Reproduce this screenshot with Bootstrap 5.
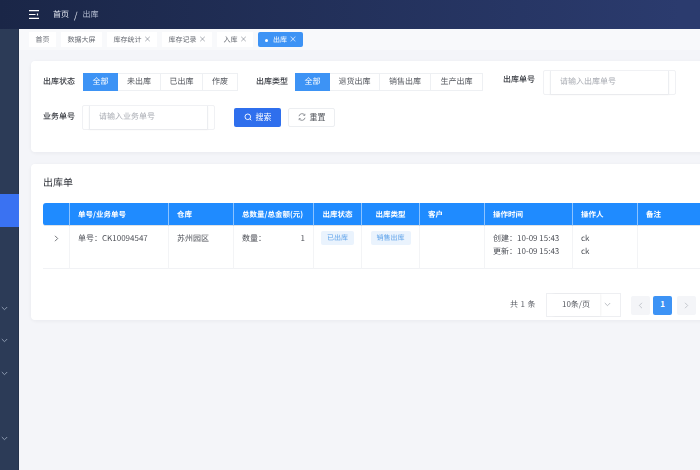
<!DOCTYPE html>
<html lang="zh-CN">
<head>
    <meta charset="UTF-8">
    <meta name="viewport" content="width=device-width, initial-scale=1.0">
    <title>出库</title>
    <link rel="stylesheet" href="https://cdn.jsdelivr.net/npm/bootstrap@5.3.0/dist/css/bootstrap.min.css">
    <style>
        html, body { height: 470px; overflow: hidden; }
        body {
            background: #f4f5f9;
            color: #4c4f56;
            font-family: "Noto Sans CJK SC", "Noto Sans", sans-serif;
            font-size: 8px;
            line-height: 1.3;
            text-rendering: geometricPrecision;
        }
        .shell { width: 800px; height: 470px; overflow: hidden; opacity: .999; }
        .side-bar { width: 19px; background: #2c3b57; flex: none; padding-top: 31px; border-right: 1px solid #26334c; }
        .side-item { height: 32.6px; color: #8d9ab0; }
        .side-item.is-active { background: #3a72f2; margin-right: -1px; }
        .side-arrow { margin-left: 1px; }
        .main-col { width: 781px; flex: none; }
        .top-bar {
            height: 29px; margin-left: -19px; padding-left: 29px;
            width: 800px;
            background: linear-gradient(90deg, #1a2647, #2b3b6e 85%);
            color: #e8ecf5;
            font-size: 8px;
            position: relative;
        }
        .top-bar span { padding-top: 2px; }
        .top-menu { margin-right: 14px; }
        .top-bar .crumb-sep { margin: 0 5px; font-size: 9px; }
        .top-bar .crumb-now { color: #aeb7cc; }
        .tab-bar { height: 21px; background: #f8f9fb; padding: 3px 0 0 10px; gap: 5px; align-items: flex-start; }
        .tab-item {
            height: 15px; padding: 2px 6.5px 0; background: #fff; font-size: 7px;
            color: #62666e; white-space: nowrap;
        }
        .tab-item.is-on { background: #3d93f5; color: #fff; border-radius: 2px; padding: 2px 7px 0; }
        .tab-dot { width: 3px; height: 3px; border-radius: 50%; background: #fff; margin-right: 5px; }
        .tab-x { color: #9a9ea6; font-size: 8px; width: 7px; margin-left: 2px; text-align: center; }
        .is-on .tab-x { color: #dcecff; }
        .body-area { padding: 11px 0 0 12px; }
        .panel-box { background: #fff; border-radius: 4px; box-shadow: 0 1px 5px rgba(30, 40, 70, .06); }
        .filter-box { height: 91px; padding: 9px 0 0 12px; }
        .filter-row { height: 24px; }
        .filter-row + .filter-row { margin-top: 11px; }
        .field-label { color: #33363d; font-weight: 500; white-space: nowrap; padding-top: 1px; }
        .field-gap { margin-left: 18px; }
        .field-gap-wide { margin-left: 20px; padding-top: 0; padding-bottom: 3px; }
        .seg-group { display: flex; height: 18px; margin-left: 8px; }
        .seg-gap { margin-left: 7px; }
        .seg-btn {
            display: flex; align-items: center; justify-content: center; padding-top: 1px;
            border: 1px solid #eef0f3; border-left-width: 0; color: #55585f; background: #fff;
        }
        .seg-btn:first-child { border-left-width: 1px; }
        .seg-btn.is-on { background: #3d93f5; border-color: #3d93f5; color: #fff; }
        .input-outer { height: 25px; width: 133px; padding: 0 6px; border: 1px solid #f0f1f4; border-radius: 2px; flex: none; }
        .input-inner {
            height: 100%; border: 1px solid #eceef1; border-width: 0 1px; padding: 1px 9px 0;
            color: #a8abb2; display: flex; align-items: center; box-shadow: 0 1px 2px rgba(0, 0, 0, .04);
            white-space: nowrap;
        }
        .act-btn { height: 19px; font-size: 8px; padding: 0; border-radius: 2px; gap: 4px; display: flex; align-items: center; justify-content: center; }
        .act-search { width: 47px; background: #2f6fed; color: #fff; border: 0; margin-left: 19px; }
        .act-reset { width: 47px; background: #fff; color: #55585f; border: 1px solid #eceef1; margin-left: 7px; }
        .list-box { height: 156px; margin-top: 12px; padding: 10px 0 0 12px; }
        .list-title { font-size: 10px; color: #33363d; height: 29px; line-height: 15px; }
        table.stock-table { table-layout: fixed; width: 720px; border-collapse: separate; border-spacing: 0; margin: 0; }
        .stock-table th {
            height: 23px; background: #1f8bff; color: #fff; font-weight: 700; font-size: 7.5px;
            padding: 2px 0 0 8px; border-right: 1px solid #8cc3ff; vertical-align: middle; white-space: nowrap;
            overflow: hidden; line-height: 1;
        }
        .stock-table th:first-child { border-radius: 3px 0 0 3px; }
        .stock-table td {
            height: 43px; padding: 6px 8px 0; border-right: 1px solid #f3f4f6; border-bottom: 1px solid #f1f2f5;
            vertical-align: top; color: #4c4f56; line-height: 13.3px; font-size: 8px; background: #fff;
            white-space: nowrap;
        }
        .stock-table th.th-center { text-align: center; padding: 2px 0 0; }
        .stock-table td.tag-cell { padding: 5px 4px 0; text-align: center; }
        .row-arrow { color: #a3a7ae; padding-left: 11px !important; }
        .qty-line { display: flex; justify-content: space-between; }
        .soft-tag {
            display: inline-block; background: #eaf3fd; color: #5fa3ea; font-size: 7px;
            padding: 0 6px; height: 14px; line-height: 15px; border-radius: 2px;
        }
        .pager-row { width: 653px; margin-top: 24px; justify-content: flex-end; align-items: center; }
        .pager-total { color: #5c5f66; margin-right: 10px; letter-spacing: .4px; }
        .size-box {
            width: 75px; height: 24px; border: 1px solid #eeeff2; padding: 0 5px; display: flex;
            align-items: center; color: #55585f; margin-right: 10px;
        }
        .size-val { width: 48px; height: 100%; display: flex; align-items: center; justify-content: center; box-shadow: 1px 0 2px rgba(0, 0, 0, .05); }
        .size-arrow { flex: 1; text-align: center; }
        .page-cell { width: 19px; height: 19px; display: flex; align-items: center; justify-content: center; background: #f4f5f8; border-radius: 2px; color: #b9bcc3; }
        .page-cell.is-on { background: #3d93f5; color: #fff; font-weight: 700; margin: 0 5px 0 3px; padding-top: 1px; }
    </style>
</head>
<body>
<div class="shell d-flex">
    <aside class="side-bar">
        <div class="side-item"></div>
        <div class="side-item"></div>
        <div class="side-item"></div>
        <div class="side-item"></div>
        <div class="side-item"></div>
        <div class="side-item is-active"></div>
        <div class="side-item"></div>
        <div class="side-item"></div>
        <div class="side-item d-flex align-items-center"><svg width="7" height="5" viewBox="0 0 7 5" class="side-arrow"><path d="M.8 1l2.7 2.7L6.2 1" fill="none" stroke="currentColor"/></svg></div>
        <div class="side-item d-flex align-items-center"><svg width="7" height="5" viewBox="0 0 7 5" class="side-arrow"><path d="M.8 1l2.7 2.7L6.2 1" fill="none" stroke="currentColor"/></svg></div>
        <div class="side-item d-flex align-items-center"><svg width="7" height="5" viewBox="0 0 7 5" class="side-arrow"><path d="M.8 1l2.7 2.7L6.2 1" fill="none" stroke="currentColor"/></svg></div>
        <div class="side-item"></div>
        <div class="side-item d-flex align-items-center"><svg width="7" height="5" viewBox="0 0 7 5" class="side-arrow"><path d="M.8 1l2.7 2.7L6.2 1" fill="none" stroke="currentColor"/></svg></div>
    </aside>
    <div class="main-col">
        <header class="top-bar d-flex align-items-center">
            <svg width="10" height="9" viewBox="0 0 10 9" class="top-menu"><path d="M0 .7h10M0 4.5h6.5M0 8.3h10M8.5 3.5v2" fill="none" stroke="#fff" stroke-width="1.2"/></svg>
            <span>首页</span><span class="crumb-sep">/</span><span class="crumb-now">出库</span>
        </header>
        <nav class="tab-bar d-flex">
            <div class="tab-item d-flex align-items-center">首页</div>
            <div class="tab-item d-flex align-items-center">数据大屏</div>
            <div class="tab-item d-flex align-items-center">库存统计<span class="tab-x">×</span></div>
            <div class="tab-item d-flex align-items-center">库存记录<span class="tab-x">×</span></div>
            <div class="tab-item d-flex align-items-center">入库<span class="tab-x">×</span></div>
            <div class="tab-item is-on d-flex align-items-center"><span class="tab-dot"></span>出库<span class="tab-x">×</span></div>
        </nav>
        <main class="body-area">
            <section class="panel-box filter-box">
                <div class="filter-row d-flex align-items-center">
                    <span class="field-label">出库状态</span>
                    <div class="seg-group">
                        <span class="seg-btn is-on" style="width:35px">全部</span>
                        <span class="seg-btn" style="width:43px">未出库</span>
                        <span class="seg-btn" style="width:42px">已出库</span>
                        <span class="seg-btn" style="width:35px">作废</span>
                    </div>
                    <span class="field-label field-gap">出库类型</span>
                    <div class="seg-group seg-gap">
                        <span class="seg-btn is-on" style="width:35px">全部</span>
                        <span class="seg-btn" style="width:50px">退货出库</span>
                        <span class="seg-btn" style="width:51px">销售出库</span>
                        <span class="seg-btn" style="width:52px">生产出库</span>
                    </div>
                    <span class="field-label field-gap-wide">出库单号</span>
                    <div class="input-outer ms-2"><div class="input-inner">请输入出库单号</div></div>
                </div>
                <div class="filter-row d-flex align-items-center">
                    <span class="field-label">业务单号</span>
                    <div class="input-outer" style="margin-left:7px"><div class="input-inner">请输入业务单号</div></div>
                    <button type="button" class="btn act-btn act-search">
                        <svg width="8" height="8" viewBox="0 0 8 8"><circle cx="3.8" cy="3.8" r="2.8" fill="none" stroke="#fff" stroke-width=".9"/><path d="M6 6l1.3 1.3" stroke="#fff" stroke-width=".9"/></svg><span>搜索</span>
                    </button>
                    <button type="button" class="btn act-btn act-reset">
                        <svg width="8" height="8" viewBox="0 0 8 8"><path d="M1 3.2A3.1 3.1 0 0 1 6.6 2M7 4.8A3.1 3.1 0 0 1 1.4 6" fill="none" stroke="#72767d" stroke-width=".8"/><path d="M6.9.8v1.6H5.3M1.1 7.2V5.6h1.6" fill="none" stroke="#72767d" stroke-width=".7"/></svg><span>重置</span>
                    </button>
                </div>
            </section>
            <section class="panel-box list-box">
                <div class="list-title">出库单</div>
                <table class="table stock-table">
                    <colgroup>
                        <col style="width:27px"><col style="width:99px"><col style="width:65px"><col style="width:80px"><col style="width:48px">
                        <col style="width:58px"><col style="width:65px"><col style="width:88px"><col style="width:65px"><col style="width:125px">
                    </colgroup>
                    <thead>
                        <tr>
                            <th></th><th>单号/业务单号</th><th>仓库</th><th>总数量/总金额(元)</th>
                            <th class="th-center">出库状态</th><th class="th-center">出库类型</th><th>客户</th><th>操作时间</th><th>操作人</th><th>备注</th>
                        </tr>
                    </thead>
                    <tbody>
                        <tr>
                            <td class="row-arrow"><svg width="5" height="7" viewBox="0 0 5 7"><path d="M1 .8l2.7 2.7L1 6.2" fill="none" stroke="currentColor" stroke-width=".8"/></svg></td>
                            <td>单号：CK10094547</td>
                            <td>苏州园区</td>
                            <td><div class="qty-line"><span>数量：</span><span>1</span></div></td>
                            <td class="tag-cell"><span class="soft-tag">已出库</span></td>
                            <td class="tag-cell"><span class="soft-tag">销售出库</span></td>
                            <td></td>
                            <td>创建：10-09 15:43<br>更新：10-09 15:43</td>
                            <td>ck<br>ck</td>
                            <td></td>
                        </tr>
                    </tbody>
                </table>
                <div class="pager-row d-flex">
                    <span class="pager-total">共 1 条</span>
                    <div class="size-box"><span class="size-val">10条/页</span><span class="size-arrow"><svg width="7" height="5" viewBox="0 0 7 5"><path d="M.8 1l2.7 2.7L6.2 1" fill="none" stroke="#a9adb4" stroke-width=".8"/></svg></span></div>
                    <span class="page-cell"><svg width="5" height="7" viewBox="0 0 5 7"><path d="M4 .8L1.3 3.5 4 6.2" fill="none" stroke="currentColor" stroke-width=".8"/></svg></span>
                    <span class="page-cell is-on">1</span>
                    <span class="page-cell"><svg width="5" height="7" viewBox="0 0 5 7"><path d="M1 .8l2.7 2.7L1 6.2" fill="none" stroke="currentColor" stroke-width=".8"/></svg></span>
                </div>
            </section>
        </main>
    </div>
</div>
<script src="https://cdn.jsdelivr.net/npm/bootstrap@5.3.0/dist/js/bootstrap.bundle.min.js"></script>
</body>
</html>
